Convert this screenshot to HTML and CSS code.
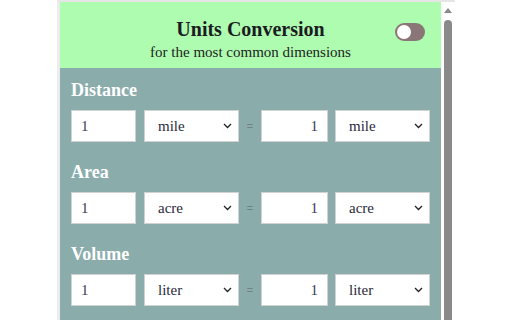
FILE: index.html
```html
<!DOCTYPE html>
<html>
<head>
<meta charset="utf-8">
<link rel="stylesheet" href="styles.css">
</head>
<body>
<div class="popup">
  <div class="main">
    <header class="head">
      <h1 class="title">Units Conversion</h1>
      <p class="subtitle">for the most common dimensions</p>
      <span class="toggle"><span class="knob"></span></span>
    </header>
    <div class="content">
      <section class="group">
        <h2 class="label">Distance</h2>
        <div class="row">
          <input class="num" value="1">
          <select class="unit unit-a"><option>mile</option></select>
          <span class="eq">=</span>
          <input class="num num-b" value="1">
          <select class="unit"><option>mile</option></select>
        </div>
      </section>
      <section class="group">
        <h2 class="label">Area</h2>
        <div class="row">
          <input class="num" value="1">
          <select class="unit unit-a"><option>acre</option></select>
          <span class="eq">=</span>
          <input class="num num-b" value="1">
          <select class="unit"><option>acre</option></select>
        </div>
      </section>
      <section class="group">
        <h2 class="label">Volume</h2>
        <div class="row">
          <input class="num" value="1">
          <select class="unit unit-a"><option>liter</option></select>
          <span class="eq">=</span>
          <input class="num num-b" value="1">
          <select class="unit"><option>liter</option></select>
        </div>
      </section>
    </div>
  </div>
  <div class="scrollbar">
    <span class="arrow"></span>
    <span class="thumb"></span>
  </div>
</div>
</body>
</html>
```

FILE: styles.css
```css
html, body {
  margin: 0;
  padding: 0;
  background: #ffffff;
  height: 320px;
  overflow: hidden;
  font-family: "Liberation Serif", "Times New Roman", serif;
}
body {
  padding-left: 57px;
}
.popup {
  display: flex;
  width: 398px;
  height: 320px;
  border-top: 2px solid #e6e6e6;
  border-left: 3px solid #ececec;
  box-sizing: border-box;
  background: #ffffff;
  overflow: hidden;
}
.main {
  width: 381px;
  flex: none;
  display: flex;
  flex-direction: column;
  overflow: hidden;
}
.head {
  position: relative;
  flex: none;
  height: 66px;
  background: #aefcb0;
  text-align: center;
  color: #1b1b22;
  box-sizing: border-box;
  padding-top: 16px;
}
.title {
  margin: 0;
  font-size: 20px;
  line-height: 22px;
  font-weight: bold;
}
.subtitle {
  margin: 2px 0 0;
  font-size: 15px;
  line-height: 20px;
  color: #222;
}
.toggle {
  position: absolute;
  left: 335px;
  top: 21px;
  width: 30px;
  height: 18px;
  border-radius: 9px;
  background: #8a7676;
}
.knob {
  position: absolute;
  left: 2px;
  top: 2px;
  width: 14px;
  height: 14px;
  border-radius: 50%;
  background: #ffffff;
}
.content {
  flex: none;
  background: #8aacab;
  padding: 10px 0 0 11px;
  min-height: 260px;
}
.group {
  margin-bottom: 18px;
}
.label {
  margin: 0 0 8px;
  font-size: 18px;
  line-height: 24px;
  font-weight: bold;
  color: #ffffff;
}
.row {
  display: flex;
  align-items: center;
  height: 32px;
}
.num {
  flex: none;
  width: 65px;
  height: 32px;
  box-sizing: border-box;
  border: 1px solid #d2d2d2;
  background: #fff;
  font-family: "Liberation Serif", "Times New Roman", serif;
  font-size: 15px;
  color: #3a3a55;
  padding: 0 9px;
  margin: 0;
  outline: none;
}
.num-b {
  width: 67px;
  text-align: right;
}
.unit {
  flex: none;
  -webkit-appearance: none;
  appearance: none;
  width: 95px;
  height: 32px;
  box-sizing: border-box;
  border: 1px solid #d2d2d2;
  border-radius: 0;
  background: #fff url("data:image/svg+xml;utf8,<svg xmlns='http://www.w3.org/2000/svg' width='9' height='6' viewBox='0 0 9 6'><path d='M1 1 L4.5 4.5 L8 1' fill='none' stroke='%23222' stroke-width='1.3'/></svg>") no-repeat right 6px center;
  font-family: "Liberation Serif", "Times New Roman", serif;
  font-size: 15px;
  color: #2a2a3a;
  padding: 0 0 0 13px;
  margin: 0;
}
.unit-a {
  margin-left: 8px;
}
.num-b + .unit {
  margin-left: 7px;
}
.eq {
  flex: none;
  width: 22px;
  text-align: center;
  font-family: "Liberation Sans", Arial, sans-serif;
  font-size: 11px;
  color: #6f8383;
}
.scrollbar {
  flex: none;
  width: 14px;
  position: relative;
  background: #ffffff;
}
.arrow {
  position: absolute;
  left: 3px;
  top: 6px;
  width: 0;
  height: 0;
  border-left: 4px solid transparent;
  border-right: 4px solid transparent;
  border-bottom: 5px solid #8a8a8a;
}
.thumb {
  position: absolute;
  left: 3px;
  top: 18px;
  width: 8px;
  bottom: 0;
  border-radius: 4px 4px 0 0;
  background: #8a8a8a;
}
```
